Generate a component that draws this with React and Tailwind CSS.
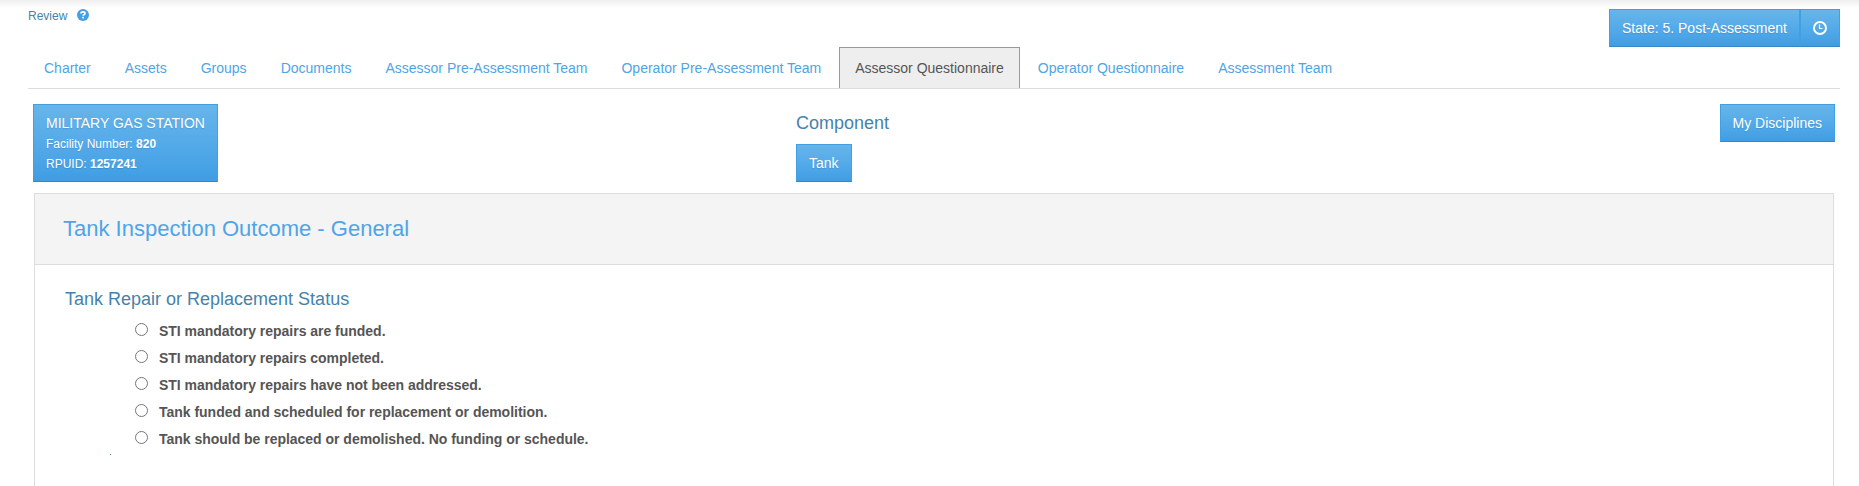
const BUTTON =
  "box-border border border-[#3fa0e3] border-b-[#3487ca] bg-linear-to-b from-[#67b5ea] via-[#50a8e8] via-60% to-[#409de3] text-left text-sm leading-5 text-white whitespace-nowrap [text-shadow:0_1px_1px_rgba(0,0,0,0.12)]";

const TABS = [
  "Charter",
  "Assets",
  "Groups",
  "Documents",
  "Assessor Pre-Assessment Team",
  "Operator Pre-Assessment Team",
  "Assessor Questionnaire",
  "Operator Questionnaire",
  "Assessment Team",
];

const OPTIONS = [
  "STI mandatory repairs are funded.",
  "STI mandatory repairs completed.",
  "STI mandatory repairs have not been addressed.",
  "Tank funded and scheduled for replacement or demolition.",
  "Tank should be replaced or demolished. No funding or schedule.",
];

function HelpIcon() {
  return (
    <svg className="size-3" viewBox="0 0 12 12" aria-hidden="true">
      <circle cx="6" cy="6" r="6" fill="#459fe4" />
      <path d="M3.9 4.6V4Q4.2 2.9 6 2.9Q8 2.9 8 4.4Q8 5.3 6.9 5.7Q6.1 6 6.1 6.8" fill="none" stroke="#fff" strokeWidth="1.7" />
      <rect x="5.1" y="7.8" width="1.9" height="1.6" fill="#fff" />
    </svg>
  );
}

function ClockIcon() {
  return (
    <svg className="size-3.5" viewBox="0 0 14 14" fill="none" stroke="#fff" aria-hidden="true">
      <circle cx="7" cy="7" r="6" strokeWidth="1.9" />
      <path d="M6.5 3.5V7.5H9.5" strokeWidth="1.2" />
    </svg>
  );
}

export default function App() {
  return (
    <div className="flex h-[486px] flex-col overflow-hidden bg-white bg-linear-to-b from-[#efefef] to-white to-[8px] font-['Liberation_Sans',Arial,sans-serif] text-sm leading-5 text-[#555]">
      <header className="flex h-[47px] shrink-0 items-start justify-between pr-[19px] pl-7">
        <div className="flex items-start pt-[6px] text-xs leading-5 text-[#4682ab]">
          <span>Review</span>
          <span className="ml-[10px] pt-[3px]">
            <HelpIcon />
          </span>
        </div>
        <div className="flex pt-[9px]">
          <button className={`${BUTTON} h-[38px] w-[191px] px-3`}>State: 5. Post-Assessment</button>
          <button className={`${BUTTON} flex h-[38px] w-10 items-center px-3`}>
            <ClockIcon />
          </button>
        </div>
      </header>

      <nav className="mr-[19px] ml-7 flex h-[42px] shrink-0 gap-[2px] border-b border-[#ddd]">
        {TABS.map((tab) => (
          <a
            key={tab}
            className={
              tab === "Assessor Questionnaire"
                ? "border border-b-0 border-[#999] bg-[#eee] px-[15px] pt-[10px] whitespace-nowrap text-[#555]"
                : "px-4 pt-[11px] whitespace-nowrap text-[#4ea5e6]"
            }
          >
            {tab}
          </a>
        ))}
      </nav>

      <section className="grid h-[104px] shrink-0 grid-cols-[763px_1fr_auto] items-start pt-[15px] pr-6 pl-[33px]">
        <button className={`${BUTTON} h-[78px] w-[185px] px-3 pt-px`}>
          <span className="-mt-px block">MILITARY GAS STATION</span>
          <span className="mt-px block text-xs leading-5">
            Facility Number: <b>820</b>
          </span>
          <span className="block text-xs leading-5">
            RPUID: <b>1257241</b>
          </span>
        </button>
        <div>
          <h2 className="mt-[9px] mb-[11px] text-lg leading-5 text-[#4682ab]">Component</h2>
          <button className={`${BUTTON} h-[38px] w-14 px-3`}>Tank</button>
        </div>
        <button className={`${BUTTON} h-[38px] w-[115px] px-[11.5px]`}>My Disciplines</button>
      </section>

      <main className="mr-[25px] ml-[34px] flex-1 border border-b-0 border-[#ddd]">
        <div className="flex h-[71px] items-center border-b border-[#ddd] bg-[#f4f4f4] pl-7">
          <h1 className="text-[22px] leading-6 text-[#4ea5e6]">Tank Inspection Outcome - General</h1>
        </div>
        <div className="pt-[22px] pl-[30px]">
          <h2 className="text-lg leading-6 text-[#4682ab]">Tank Repair or Replacement Status</h2>
          <div className="mt-[7px] ml-[70px] flex flex-col gap-[7px]">
            {OPTIONS.map((option) => (
              <label key={option} className="flex h-5 items-start gap-[11px] font-bold tracking-[-0.02px]">
                <input type="radio" name="status" className="mt-[5px] size-[13px]" />
                <span className="pt-[3px]">{option}</span>
              </label>
            ))}
          </div>
          <div className="mt-[8px] ml-[45px] size-px bg-[#3f9fd0]" />
        </div>
      </main>
    </div>
  );
}
